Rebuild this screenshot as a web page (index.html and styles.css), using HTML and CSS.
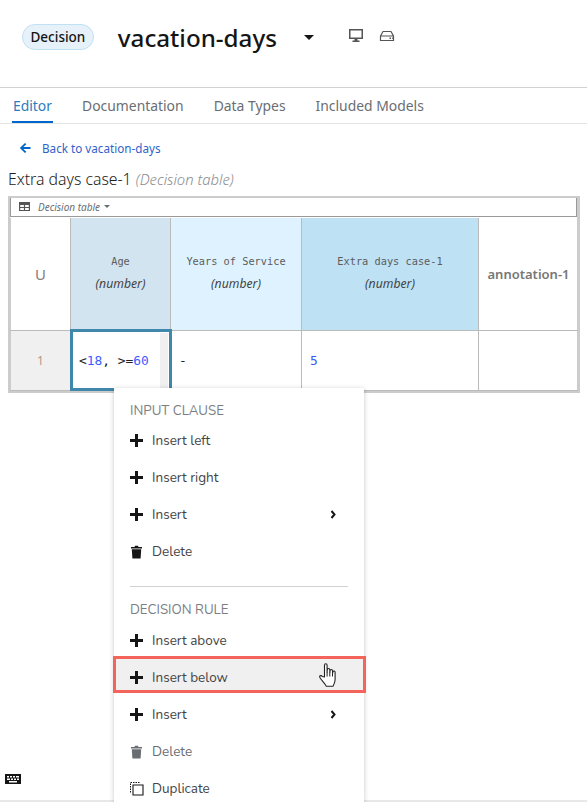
FILE: index.html
```html
<!DOCTYPE html>
<html>
<head>
  <title>vacation-days</title>
  <link rel="stylesheet" href="styles.css">
</head>
<body>

<div class="header">
  <span class="badge">Decision</span>
  <span class="model-name">vacation-days</span>
  <span class="caret"></span>
  <svg class="hdr-icon first" width="16" height="15" viewBox="0 0 16 15"><path fill="#555" fill-rule="evenodd" d="M1 1h14v10H9.500v1.500H11.500V14h-7v-1.500h2V11H1zM2.500 2.500v7h11v-7z"/></svg>
  <svg class="hdr-icon" width="16" height="15" viewBox="0 0 16 15"><path fill="none" stroke="#555" stroke-width="1.200" d="M1.500 8l2.500-4.500h8l2.500 4.500v4.500h-13zM1.500 8h13"/><path fill="#555" d="M10.500 9.500h1.500v1.500h-1.500zM13 9.500h.8v1.500H13z"/></svg>
</div>

<div class="tabs">
  <a class="tab active">Editor</a>
  <a class="tab">Documentation</a>
  <a class="tab">Data Types</a>
  <a class="tab">Included Models</a>
</div>

<div class="back">
  <svg width="12" height="12" viewBox="0 0 12 12"><path fill="#06c" d="M6 1l1.300 1.300L4.400 5H11.500v2H4.400l2.900 2.700L6 11 .8 6z"/></svg>
  <a>Back to vacation-days</a>
</div>

<h2 class="dt-title">Extra days case-1 <i>(Decision table)</i></h2>

<div class="dt-frame">
  <div class="dt-toolbar">
    <svg width="11" height="9" viewBox="0 0 11 9"><path fill="#555" fill-rule="evenodd" d="M0 0h11v9H0zM1.200 3v2h3.700V3zm4.900 0v2h3.700V3zM1.200 6v2h3.700V6zm4.900 0v2h3.700V6z"/></svg>
    <i>Decision table</i>
    <span class="mini-caret"></span>
  </div>
  <table class="dt">
    <colgroup>
      <col class="c-u"><col class="c-age"><col class="c-years"><col class="c-extra"><col class="c-note">
    </colgroup>
    <tr class="head-row">
      <th class="hit">U</th>
      <th class="input-sel"><code>Age</code><i>(number)</i></th>
      <th class="input"><code>Years of Service</code><i>(number)</i></th>
      <th class="output"><code>Extra days case-1</code><i>(number)</i></th>
      <th class="note">annotation-1</th>
    </tr>
    <tr class="body-row">
      <td class="num">1</td>
      <td class="selected"><code>&lt;<b>18</b>, &gt;=<b>60</b></code><span class="cell-edge"></span></td>
      <td><code>-</code></td>
      <td><code><b>5</b></code></td>
      <td></td>
    </tr>
  </table>
</div>

<div class="menu">
  <div class="menu-title">INPUT CLAUSE</div>
  <div class="item"><span class="plus"></span>Insert left</div>
  <div class="item"><span class="plus"></span>Insert right</div>
  <div class="item"><span class="plus"></span>Insert<svg class="chev" width="7" height="9" viewBox="0 0 7 9"><path fill="none" stroke="#151515" stroke-width="2" d="M1.500 1l3 3.500-3 3.500"/></svg></div>
  <div class="item"><svg class="ico" width="13" height="14" viewBox="0 0 13 14"><path fill="#151515" d="M1 2h3.500l.5-1.200h3L8.500 2H12v1.400H1zM1.800 4.200h9.400l-.6 9.300H2.400z"/></svg>Delete</div>
  <hr class="sep">
  <div class="menu-title second">DECISION RULE</div>
  <div class="item"><span class="plus"></span>Insert above</div>
  <div class="item hover"><span class="plus"></span>Insert below
    <svg class="hand" width="20" height="26" viewBox="0 0 20 26"><path fill="#fff" stroke="#222" stroke-width="1.100" stroke-linejoin="round" d="M6.500 15V3.200c0-1.900 2.600-1.900 2.600 0V10l.2-2.200c0-1.700 2.500-1.700 2.500 0l.1 2.600.2-1.800c.1-1.600 2.400-1.500 2.400.1l.1 2.300.3-1.200c.3-1.300 2.200-1 2.200.4v7c0 3.500-1.500 5.300-2 7H8.200c-.5-1.800-2.400-3.500-4-5.500-1.100-1.400-3-3.200-2.600-4.300.5-1.200 2-.8 2.800.1z"/><path stroke="#222" fill="none" d="M9.100 10v4.500M11.800 10.400v4.100M14.500 10.500v4"/></svg>
  </div>
  <div class="item"><span class="plus"></span>Insert<svg class="chev" width="7" height="9" viewBox="0 0 7 9"><path fill="none" stroke="#151515" stroke-width="2" d="M1.500 1l3 3.500-3 3.500"/></svg></div>
  <div class="item disabled"><svg class="ico" width="13" height="14" viewBox="0 0 13 14"><path fill="#6a6e73" d="M1 2h3.500l.5-1.200h3L8.500 2H12v1.400H1zM1.800 4.200h9.400l-.6 9.300H2.400z"/></svg>Delete</div>
  <div class="item"><svg class="ico dup" width="14" height="14" viewBox="0 0 14 14"><path fill="none" stroke="#151515" stroke-dasharray="1.500 1" d="M.5 10.500V.5h10"/><path fill="#fff" stroke="#151515" stroke-width="1.100" d="M3 3h10v10H3z"/></svg>Duplicate</div>
</div>

<svg class="kbd" width="16" height="10" viewBox="0 0 16 10"><path fill="#151515" fill-rule="evenodd" d="M0 0h16v10H0zM2 2v1.500h2V2zm3 0v1.500h2V2zm3 0v1.500h2V2zm3 0v1.500h3V2zM2 4.500V6h3V4.500zm4 0V6h2V4.500zm3 0V6h2V4.500zm3 0V6h2V4.500zM4 7v1.500h8V7z"/></svg>
<div class="page-end"></div>

</body>
</html>
```

FILE: styles.css
```css
html, body { margin: 0; padding: 0; }
body { position: relative; height: 802px; overflow: hidden; background: #fff; font-family: "Noto Sans", sans-serif; color: #151515; }

.header { height: 74px; border-bottom: 1px solid #d2d2d2; display: flex; align-items: center; padding: 0 0 13px 22px; }
.badge { font-size: 13.500px; font-weight: 500; color: #151515; background: #e7f1fa; border: 1px solid #bee1f4; border-radius: 13px; padding: 0 7.500px; height: 24px; line-height: 24px; }
.model-name { font-size: 24.200px; font-weight: 500; margin-left: 24px; }
.caret { width: 0; height: 0; margin-left: 27px; border-left: 5px solid transparent; border-right: 5px solid transparent; border-top: 5px solid #151515; }
.hdr-icon { margin-left: 15px; margin-top: -4px; }
.hdr-icon.first { margin-left: 34px; }

.tabs { display: flex; height: 35px; border-bottom: 1px solid #e4e4e4; padding-left: 12px; gap: 28px; }
.tab { font-size: 13.900px; line-height: 36px; color: #6a6e73; padding: 0 1px; height: 35px; box-sizing: border-box; }
.tab.active { color: #2b7bbd; border-bottom: 2px solid #06c; }

.back { display: flex; align-items: center; padding: 16px 0 0 19px; height: 15px; font-size: 11.700px; color: #2f63c9; gap: 11px; }
.dt-title { font-size: 15.800px; font-weight: 300; margin: 14px 0 0 8px; line-height: 20px; color: #222; }
.dt-title i { color: #8a8d90; font-size: 14.800px; }

.dt-frame { width: 572px; margin: 7px 0 0 8px; border: 3px solid #ccc; border-width: 2px 3px 2px 2px; box-sizing: border-box; height: 197px; }
.dt-toolbar { height: 19px; box-sizing: border-box; background: #fff; border: 1px solid #999; border-width: 0 1px 1px 1px; display: flex; align-items: center; padding: 0 0 1px 8px; gap: 8px; font-size: 10px; color: #6a6e73; }
.mini-caret { width: 0; height: 0; margin-left: -4px; border-left: 3px solid transparent; border-right: 3px solid transparent; border-top: 3px solid #6a6e73; }

.dt { border-collapse: collapse; table-layout: fixed; width: 568px; margin-top: 1px; }
.dt th, .dt td { border: 1px solid #bbb; padding: 0; text-align: center; font-weight: 400; }
.dt tr > *:first-child { border-left: 1px solid #ccc; }
.dt tr > *:last-child { border-right: 0; }
.dt tr:first-child > * { border-top: 0; }
.c-u { width: 60px; }
.c-age { width: 100px; }
.c-years { width: 131px; }
.c-extra { width: 177px; }
.head-row th { height: 112px; box-sizing: border-box; padding-bottom: 2px; font-size: 12px; color: #555; }
.head-row code { display: block; font-family: "DejaVu Sans Mono", monospace; font-size: 10.300px; line-height: 12px; margin-bottom: 11px; color: #5c5c5c; }
.head-row i { display: block; font-family: "Noto Sans", sans-serif; font-size: 12.200px; line-height: 12px; color: #444; }
.head-row .hit { padding-bottom: 0; font-size: 15px; color: #8a8078; }
.input-sel { background: #d2e4f0; }
.input { background: #def3ff; }
.output { background: #bee1f4; }
.head-row .note { padding-bottom: 0; font-size: 13px; font-weight: 600; color: #777; white-space: nowrap; }
.body-row td { height: 60px; text-align: left; padding: 0 0 0 8px; box-sizing: border-box; font-size: 11px; position: relative; }
.body-row code { font-family: "DejaVu Sans Mono", monospace; font-size: 12.900px; color: #222; }
.body-row b { color: #3b5bff; font-weight: 400; }
.body-row .num { background: #f0f0f0; text-align: center; padding: 0; font-size: 12px; color: #b09a88; }
.body-row .selected { outline: 3px solid #3f87ab; outline-offset: -2px; }
.cell-edge { position: absolute; top: 2px; right: 2px; bottom: 2px; width: 8px; background: #f0f0f0; }

.menu { position: absolute; z-index: 1; left: 114px; top: 388px; width: 250px; height: 414px; background: #fff; box-shadow: 0 1px 5px rgba(0,0,0,.22); font-family: "Nunito", "Lato", sans-serif; font-size: 13.500px; color: #444; }
.menu-title { font-size: 13.300px; color: #7a7e83; padding: 15px 0 0 16px; line-height: 16px; height: 16px; }
.menu-title.second { padding-top: 15px; }
.item { position: relative; display: flex; align-items: center; height: 37px; padding-left: 16px; }
.menu-title + .item { margin-top: 3px; }
.menu-title.second + .item { margin-top: 4px; }
.plus { width: 13px; height: 13px; margin-right: 9px; flex: none; background: linear-gradient(#151515,#151515) center/13px 3px no-repeat, linear-gradient(#151515,#151515) center/3px 13px no-repeat; }
.ico { margin-right: 9px; flex: none; }
.ico.dup { margin-right: 8px; }
.chev { position: absolute; left: 216px; top: 14px; }
.disabled { color: #6a6e73; }
.sep { border: 0; border-top: 1px solid #d2d2d2; margin: 16px 16px 0 16px; }
.hover::before { content: ""; position: absolute; z-index: -1; left: -1px; right: -2px; top: -3px; height: 37px; box-sizing: border-box; background: #f0f0f0; border: 3px solid #f4645a; }
.hand { position: absolute; left: 204px; top: 3px; }

.kbd { position: absolute; left: 5px; top: 774px; }
.page-end { position: absolute; left: 0; right: 0; top: 800px; height: 2px; background: #e8e8e8; }
```
